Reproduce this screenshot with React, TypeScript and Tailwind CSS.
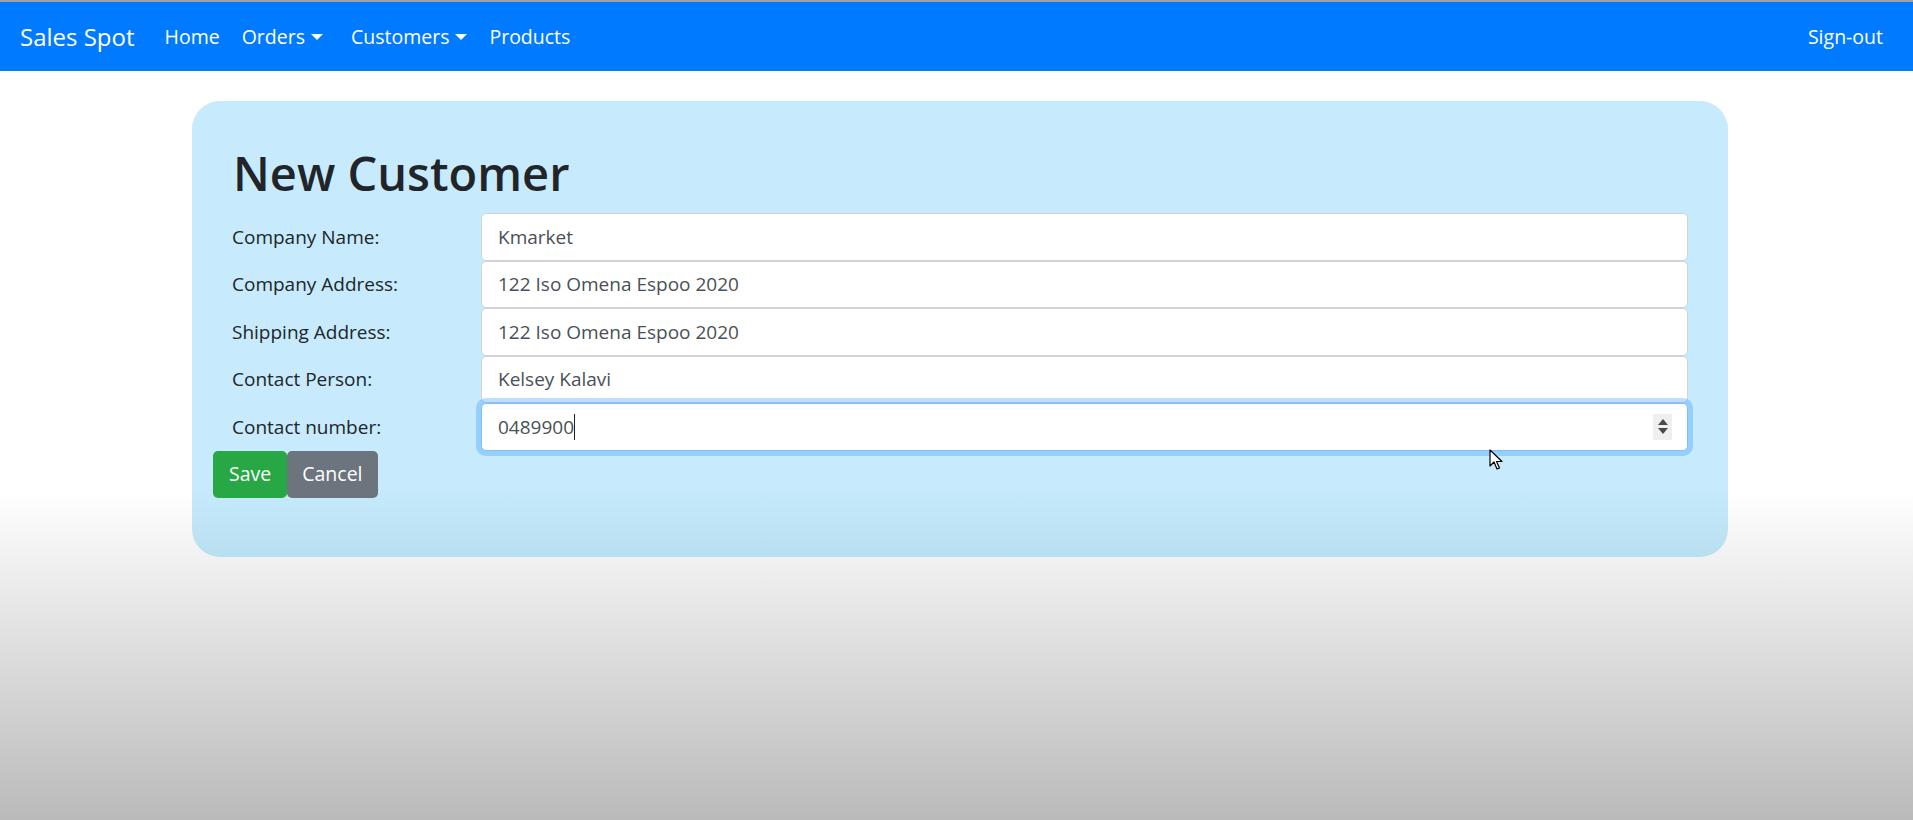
const fields = [
  { label: "Company Name:", value: "Kmarket" },
  { label: "Company Address:", value: "122 Iso Omena Espoo 2020" },
  { label: "Shipping Address:", value: "122 Iso Omena Espoo 2020" },
  { label: "Contact Person:", value: "Kelsey Kalavi" },
];

function Caret() {
  return (
    <span className="ml-[6px] inline-block h-0 w-0 border-x-[6px] border-t-[6px] border-x-transparent border-t-white align-[4px]" />
  );
}

export default function App() {
  return (
    <div className="relative min-h-screen bg-[linear-gradient(to_bottom,#ffffff_60%,#bababa)] font-['Open_Sans',sans-serif]">
      <nav className="flex h-[71px] items-center border-t-2 border-[#9ea3a8] bg-[#007bff] px-[20px] text-white">
        <a className="mr-[20px] text-[24px]">Sales Spot</a>
        <ul className="flex items-center text-[19.5px]">
          <li className="pl-[10px] pr-[12px]">Home</li>
          <li className="pl-[10px] pr-[18px]">
            Orders
            <Caret />
          </li>
          <li className="pl-[10px] pr-[12px]">
            Customers
            <Caret />
          </li>
          <li className="px-[10px]">Products</li>
        </ul>
        <div className="ml-auto px-[10px] text-[19.5px]">Sign-out</div>
      </nav>

      <main className="pt-[30px]">
        <div className="ml-[192px] w-[1536px] rounded-[28px] bg-[linear-gradient(to_bottom,#c7ebfc_84%,#b8dff0)] px-[21px] pb-[59px] pt-[42px]">
          <h1 className="mb-[10px] px-[20px] text-[47px] font-semibold leading-[60px] text-[#212529]">
            New Customer
          </h1>
          <form>
            {fields.map((f) => (
              <div key={f.label} className="grid h-[47.5px] grid-cols-[249px_1fr] items-center">
                <label className="px-[19px] text-[19px] text-[#212529]">{f.label}</label>
                <div className="px-[19px]">
                  <input
                    readOnly
                    value={f.value}
                    className="h-[47.5px] w-full rounded-[5px] border border-[#ced4da] bg-white px-[16px] text-[19px] text-[#495057] outline-none"
                  />
                </div>
              </div>
            ))}
            <div className="grid h-[47.5px] grid-cols-[249px_1fr] items-center">
              <label className="px-[19px] text-[19px] text-[#212529]">Contact number:</label>
              <div className="px-[19px]">
                <div className="flex h-[47.5px] items-center rounded-[5px] border border-[#80bdff] bg-white pl-[16px] pr-[15px] text-[19px] text-[#495057] shadow-[0_0_0_5px_rgba(0,123,255,0.25)]">
                  <span>0489900</span>
                  <span className="h-[26px] w-px bg-[#222]" />
                  <div className="ml-auto flex h-[26px] w-[19px] flex-col items-center justify-center gap-[3px] bg-[#efefef]">
                    <span className="h-0 w-0 border-x-[5px] border-b-[6px] border-x-transparent border-b-[#4a4a4a]" />
                    <span className="h-0 w-0 border-x-[5px] border-t-[6px] border-x-transparent border-t-[#4a4a4a]" />
                  </div>
                </div>
              </div>
            </div>
            <div className="flex">
              <button type="button" className="h-[47px] rounded-[5px] bg-[#28a745] px-[16px] text-[19.5px] text-white">
                Save
              </button>
              <button type="button" className="h-[47px] rounded-[5px] bg-[#6c757d] px-[15px] text-[19.5px] text-white">
                Cancel
              </button>
            </div>
          </form>
        </div>
      </main>

      <svg className="absolute left-[1489px] top-[449px]" width="14" height="21" viewBox="0 0 14 21">
        <path d="M1 1 L1 17 L5 13 L8 20 L10.5 19 L7.5 12.5 L13 12.5 Z" fill="#fff" stroke="#000" strokeWidth="1.2" strokeLinejoin="round" />
      </svg>
    </div>
  );
}
